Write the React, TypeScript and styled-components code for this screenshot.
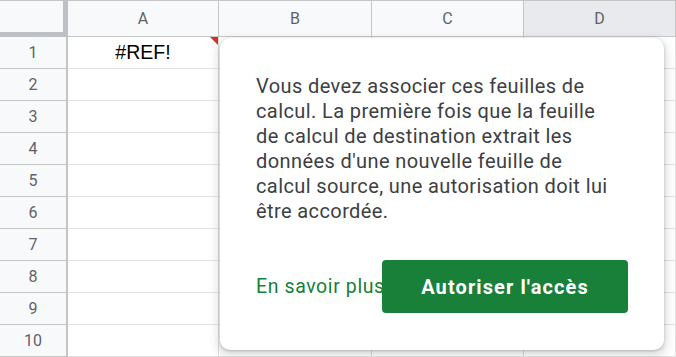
import { FC, Fragment } from 'react';
import styled, { createGlobalStyle } from 'styled-components';

const GlobalStyle = createGlobalStyle`
    html, body {
        margin: 0;
        padding: 0;
        background: #ffffff;
        overflow: hidden;
    }
    body {
        font-family: Roboto, "Liberation Sans", Arial, sans-serif;
    }
`;

const colors = {
    headerBg: '#f8f9fa',
    headerSelected: '#e8eaed',
    headerLine: '#c4c7c5',
    cellLine: '#e1e1e1',
    headerText: '#5f6368',
    text: '#000000',
    popupText: '#3c4043',
    green: '#188038',
};

const Page = styled('div')`
    position: relative;
    width: 676px;
    height: 357px;
    overflow: hidden;
`;

const Sheet = styled('div')`
    display: grid;
    grid-template-columns: 68px 151px 153px 152px 152px;
    grid-auto-rows: 32px;
    grid-template-rows: 37px;
`;

const Corner = styled('div')`
    background: ${colors.headerBg};
    border-top: 1px solid ${colors.headerLine};
    border-right: 5px solid #bdc1c6;
    border-bottom: 5px solid #bdc1c6;
    box-sizing: border-box;
`;

const ColHeader = styled('div')<{ $selected?: boolean }>`
    background: ${(p) => (p.$selected ? colors.headerSelected : colors.headerBg)};
    border-top: 1px solid ${colors.headerLine};
    border-right: 1px solid ${colors.headerLine};
    border-bottom: 1px solid ${colors.headerLine};
    box-sizing: border-box;
    display: flex;
    align-items: center;
    justify-content: center;
    color: ${colors.headerText};
    font-size: 16px;
`;

const RowHeader = styled('div')`
    background: ${colors.headerBg};
    border-right: 2px solid ${colors.headerLine};
    border-bottom: 1px solid ${colors.headerLine};
    box-sizing: border-box;
    display: flex;
    align-items: center;
    justify-content: center;
    color: ${colors.headerText};
    font-size: 16px;
`;

const Cell = styled('div')`
    position: relative;
    border-right: 1px solid ${colors.cellLine};
    border-bottom: 1px solid ${colors.cellLine};
    box-sizing: border-box;
    display: flex;
    align-items: center;
    justify-content: center;
    color: ${colors.text};
    font-family: "Liberation Sans", Arial, sans-serif;
    font-size: 19.5px;
`;

const ErrorMark = styled('span')`
    position: absolute;
    top: 0;
    right: 0;
    width: 0;
    height: 0;
    border-top: 8px solid #d93025;
    border-left: 8px solid transparent;
`;

const Popup = styled('div')`
    position: absolute;
    left: 220px;
    top: 38px;
    width: 444px;
    height: 312px;
    box-sizing: border-box;
    background: #ffffff;
    border-radius: 10px;
    box-shadow: 0 1px 3px rgba(60, 64, 67, 0.3), 0 4px 8px 3px rgba(60, 64, 67, 0.15);
    padding: 36px 0 0 36px;
    display: flex;
    flex-direction: column;
`;

const Message = styled('p')`
    margin: 0;
    width: 352px;
    font-size: 20px;
    line-height: 25px;
    color: ${colors.popupText};
    letter-spacing: 0.4px;
`;

const Actions = styled('div')`
    display: flex;
    align-items: center;
    margin-top: 36px;
`;

const LearnMore = styled('a')`
    flex-shrink: 0;
    color: ${colors.green};
    font-size: 19.5px;
    font-weight: 400;
    letter-spacing: 0.6px;
    text-decoration: none;
    white-space: nowrap;
    width: 126px;
`;

const AllowButton = styled('button')`
    flex-shrink: 0;
    border: none;
    margin: 0;
    width: 246px;
    height: 53px;
    border-radius: 4px;
    background: ${colors.green};
    color: #ffffff;
    font-family: Roboto, "Liberation Sans", Arial, sans-serif;
    font-size: 20px;
    font-weight: 700;
    letter-spacing: 1.1px;
    cursor: pointer;
`;

const columns = ['A', 'B', 'C', 'D'];
const rows = Array.from({ length: 10 }, (_, i) => i + 1);

const App: FC = () => (
    <Page>
        <GlobalStyle />
        <Sheet>
            <Corner />
            {columns.map((c) => (
                <ColHeader key={c} $selected={c === 'D'}>{c}</ColHeader>
            ))}
            {rows.map((r) => (
                <Fragment key={r}>
                    <RowHeader>{r}</RowHeader>
                    {columns.map((c) => (
                        <Cell key={`${c}${r}`}>
                            {r === 1 && c === 'A' && (
                                <>
                                    #REF!
                                    <ErrorMark />
                                </>
                            )}
                        </Cell>
                    ))}
                </Fragment>
            ))}
        </Sheet>
        <Popup>
            <Message>
                Vous devez associer ces feuilles de calcul. La première fois que la feuille
                de calcul de destination extrait les données d'une nouvelle feuille de
                calcul source, une autorisation doit lui être accordée.
            </Message>
            <Actions>
                <LearnMore href="#">En savoir plus</LearnMore>
                <AllowButton>Autoriser l'accès</AllowButton>
            </Actions>
        </Popup>
    </Page>
);

export default App;
